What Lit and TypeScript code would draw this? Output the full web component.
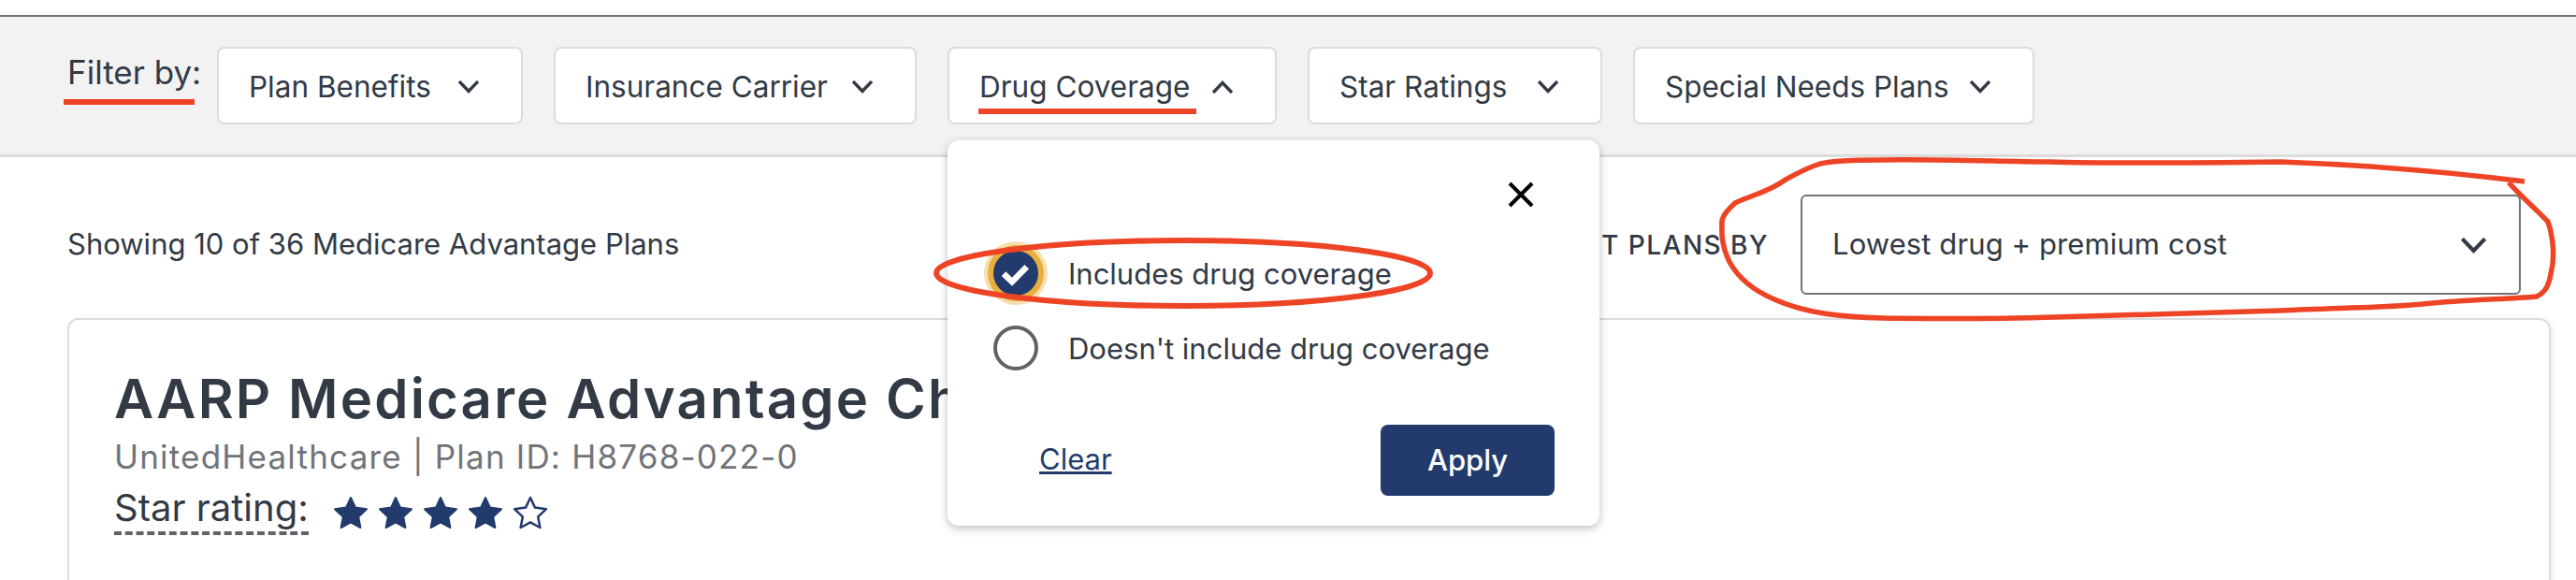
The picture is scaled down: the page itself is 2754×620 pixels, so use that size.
import { LitElement, css, html } from 'lit'
import { customElement } from 'lit/decorators.js'

const chevron = (up = false) =>
  html`<svg class="chev" viewBox="0 0 24 14" fill="none" stroke="currentColor" stroke-width="3.4">
    <path d=${up ? 'M2 13 L12 2.5 L22 13' : 'M2 1 L12 11.5 L22 1'}></path>
  </svg>`

const star = (filled: boolean) =>
  html`<svg class="star ${filled ? '' : 'empty'}" viewBox="0 0 38 36">
    <path
      d="M19 2 L24 12.6 L36 14.2 L27.2 22.4 L29.4 34 L19 28.4 L8.6 34 L10.8 22.4 L2 14.2 L14 12.6 Z"
    ></path>
  </svg>`

@customElement('app-root')
export class AppRoot extends LitElement {
  static styles = css`
    :host {
      display: block;
      position: relative;
      width: 2754px;
      height: 620px;
      overflow: hidden;
      background: #fff;
      color: #323a45;
      font-family: Inter, 'Noto Sans', sans-serif;
      font-size: 31px;
    }

    .bar {
      display: grid;
      grid-template-columns: 126px 327px 388px 352px 315px 429px;
      column-gap: 33px;
      justify-content: start;
      margin-top: 16px;
      padding: 32px 0 32px 73px;
      height: 83px;
      background: #f2f2f2;
      border-top: 2px solid #6f7378;
      border-bottom: 3px solid #dcdcdc;
    }

    .filter-label {
      margin: 9px 0 0 -1px;
      font-size: 35px;
      line-height: 36px;
      white-space: nowrap;
    }

    .filter-btn {
      display: flex;
      align-items: center;
      justify-content: space-between;
      box-sizing: border-box;
      padding: 2px 44px 0 32px;
      background: #fff;
      border: 2px solid #dcdcdc;
      border-radius: 8px;
      font-size: 31.5px;
      white-space: nowrap;
    }

    .chev {
      width: 24px;
      height: 14px;
      flex: none;
    }

    main {
      padding: 40px 59px 0 72px;
    }

    .summary {
      display: flex;
      align-items: center;
      justify-content: space-between;
      height: 107px;
    }

    .count {
      padding-bottom: 2px;
    }

    .sort {
      display: flex;
      align-items: center;
      gap: 34px;
    }

    .sort-label {
      font-size: 28px;
      font-weight: 500;
      letter-spacing: 1.5px;
      text-transform: uppercase;
    }

    .select {
      display: flex;
      align-items: center;
      justify-content: space-between;
      box-sizing: border-box;
      width: 770px;
      height: 107px;
      padding: 0 34px 2px 32px;
      border: 2px solid #6f7378;
      border-radius: 6px;
      letter-spacing: 0.1px;
    }

    .select .chev {
      width: 29px;
      height: 17px;
      margin-top: 4px;
    }

    .card {
      box-sizing: border-box;
      height: 400px;
      margin: 25px -32px 0 0;
      padding: 54px 48px;
      border: 2px solid #dcdcdc;
      border-radius: 12px;
      box-shadow: 2px 2px 5px rgba(0, 0, 0, 0.08);
    }

    h1 {
      margin: 0;
      font-size: 58px;
      line-height: 60px;
      font-weight: 600;
      letter-spacing: 2.2px;
      white-space: nowrap;
    }

    .plan-id {
      margin-top: 12px;
      font-size: 35px;
      line-height: 40px;
      letter-spacing: 1.2px;
      color: #70747a;
    }

    .rating {
      display: flex;
      align-items: center;
      margin-top: 15px;
    }

    .rating-label {
      font-size: 40px;
      line-height: 40px;
      padding-bottom: 5px;
      border-bottom: 4px dashed #5f6368;
      margin-right: 26px;
    }

    .stars {
      display: flex;
      gap: 10px;
    }

    .star {
      width: 38px;
      height: 36px;
      fill: #233b6c;
      stroke: #233b6c;
      stroke-width: 2;
      stroke-linejoin: round;
    }

    .star.empty {
      fill: #fff;
      stroke-width: 2.5;
    }

    .popup {
      position: absolute;
      left: 1013px;
      top: 150px;
      box-sizing: border-box;
      width: 697px;
      height: 412px;
      padding: 44px 48px 0 49px;
      background: #fff;
      border-radius: 12px;
      box-shadow: 0 3px 10px rgba(0, 0, 0, 0.25);
    }

    .close {
      display: flex;
      justify-content: flex-end;
      margin-right: 22px;
      margin-bottom: 30px;
    }

    .close svg {
      width: 28px;
      height: 28px;
    }

    .option {
      display: flex;
      align-items: center;
      gap: 32px;
      height: 80px;
    }

    .radio {
      box-sizing: border-box;
      width: 48px;
      height: 48px;
      border-radius: 50%;
      border: 4px solid #5f6368;
    }

    .radio.checked {
      border: none;
      background: #233b6c;
      box-shadow: 0 0 0 6px #e8ae3e, 0 0 0 10px #f5dfb0;
    }

    .radio svg {
      display: block;
      width: 48px;
      height: 48px;
    }

    .actions {
      display: flex;
      align-items: center;
      justify-content: space-between;
      margin-top: 42px;
      padding-left: 49px;
    }

    .clear {
      margin-bottom: 3px;
      color: #233b6c;
      text-decoration: underline;
    }

    .apply {
      display: flex;
      align-items: center;
      justify-content: center;
      box-sizing: border-box;
      width: 186px;
      height: 76px;
      padding-bottom: 2px;
      background: #233b6c;
      border-radius: 8px;
      color: #fff;
      font-weight: 500;
    }

    .marks {
      position: absolute;
      left: 0;
      top: 0;
      width: 2754px;
      height: 620px;
      fill: none;
      stroke: #ee4426;
      pointer-events: none;
    }
  `

  render() {
    return html`
      <div class="bar">
        <div class="filter-label">Filter by:</div>
        <div class="filter-btn">Plan Benefits ${chevron()}</div>
        <div class="filter-btn">Insurance Carrier ${chevron()}</div>
        <div class="filter-btn">Drug Coverage ${chevron(true)}</div>
        <div class="filter-btn">Star Ratings ${chevron()}</div>
        <div class="filter-btn">Special Needs Plans ${chevron()}</div>
      </div>
      <main>
        <div class="summary">
          <div class="count">Showing 10 of 36 Medicare Advantage Plans</div>
          <div class="sort">
            <span class="sort-label">Sort plans by</span>
            <div class="select">Lowest drug + premium cost ${chevron()}</div>
          </div>
        </div>
        <div class="card">
          <h1>AARP Medicare Advantage Choice</h1>
          <div class="plan-id">UnitedHealthcare | Plan ID: H8768-022-0</div>
          <div class="rating">
            <span class="rating-label">Star rating:</span>
            <div class="stars">${[true, true, true, true, false].map((f) => star(f))}</div>
          </div>
        </div>
      </main>
      <div class="popup">
        <div class="close">
          <svg viewBox="0 0 28 28" fill="none" stroke="#000" stroke-width="4">
            <path d="M2 2 L26 26 M26 2 L2 26"></path>
          </svg>
        </div>
        <div class="option">
          <div class="radio checked">
            <svg viewBox="0 0 48 48" fill="none" stroke="#fff" stroke-width="6.5">
              <path d="M11 24.7 L20 33.3 L35.7 17.3"></path>
            </svg>
          </div>
          Includes drug coverage
        </div>
        <div class="option">
          <div class="radio"></div>
          Doesn't include drug coverage
        </div>
        <div class="actions">
          <span class="clear">Clear</span>
          <div class="apply">Apply</div>
        </div>
      </div>
      <svg class="marks" viewBox="0 0 2754 620">
        <path d="M68 109 H208" stroke-width="6"></path>
        <path d="M1046 119 H1279" stroke-width="6"></path>
        <ellipse cx="1265" cy="292" rx="264" ry="35" stroke-width="6"></ellipse>
        <path
          d="M2699 194 C2620 184 2520 176 2438 173 C2360 174 2260 175 2189 173 C2120 172 2060 170 2013 171 C1980 171 1958 172 1946 175 C1930 180 1920 186 1909 192 C1890 206 1868 210 1855 217 C1843 228 1840 234 1841 240 C1840 255 1843 268 1849 280 C1860 300 1878 312 1897 320 C1930 335 1970 339 2013 340 C2080 341 2130 341 2195 339 C2280 337 2360 335 2438 332 C2500 329 2550 329 2590 325 C2640 320 2680 320 2712 317 C2722 312 2725 304 2727 293 C2730 282 2730 270 2729 260 C2728 250 2727 245 2724 237 C2710 222 2695 210 2682 195"
          stroke-width="5.5"
        ></path>
      </svg>
    `
  }
}
